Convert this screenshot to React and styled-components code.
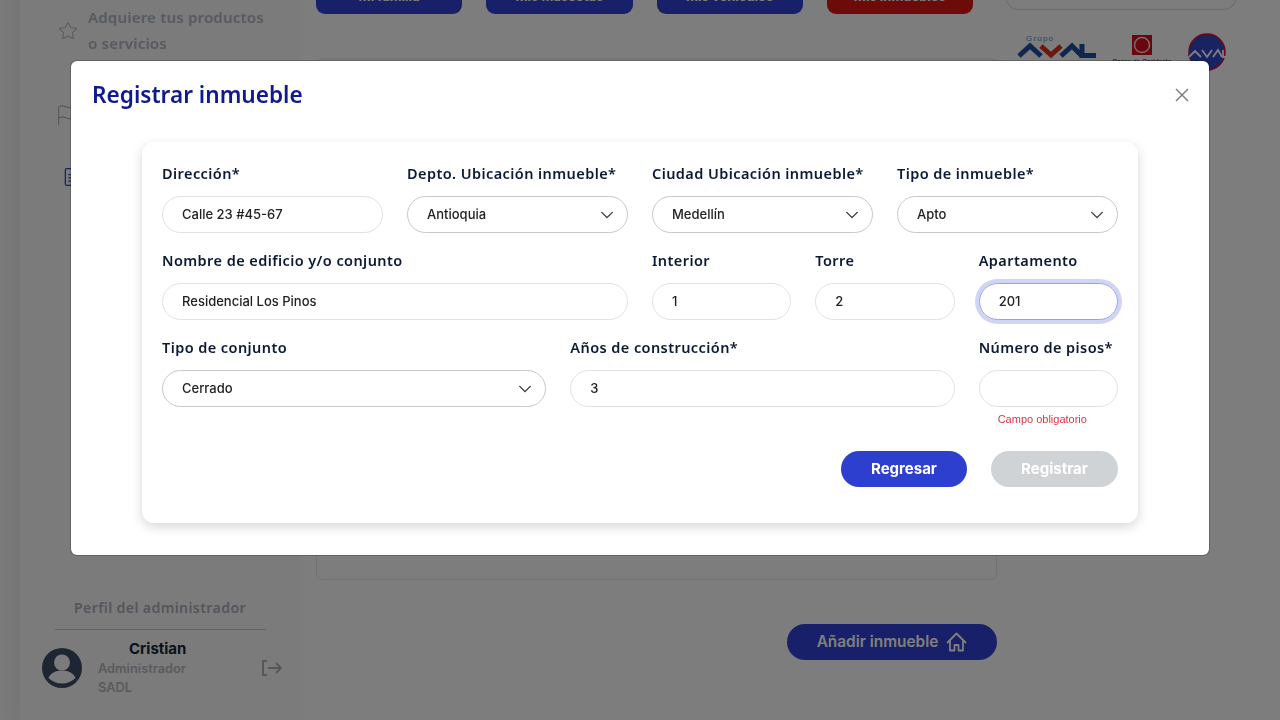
import React from "react";
import styled, { createGlobalStyle } from "styled-components";
import { Star, Flag, FileText } from "lucide-react";

const humanist = `"Noto Sans", "Open Sans", sans-serif`;
const geometric = `Inter, "Noto Sans", sans-serif`;

const Global = createGlobalStyle`
  html, body { margin: 0; padding: 0; background: #fafafa; overflow: hidden; }
  * { box-sizing: border-box; }
`;

const Viewport = styled.div`
  width: 1280px;
  height: 720px;
  overflow: hidden;
  background: #f4f4f4;
`;

const Page = styled.div`
  display: flex;
  margin-top: -26px;
  height: 746px;
`;

const Sidebar = styled.aside`
  width: 280px;
  margin-left: 20px;
  flex: none;
  background: #f7f7f7;
  box-shadow: 0 0 20px rgba(0, 0, 0, 0.08);
  padding: 31px 0 0 0;
  display: flex;
  flex-direction: column;
`;

const NavItem = styled.div`
  display: flex;
  align-items: center;
  gap: 10px;
  padding-left: ${(p) => p.$indent}px;
  color: ${(p) => p.$color};
  margin-bottom: ${(p) => p.$gap}px;
  svg { flex: none; }
`;

const NavText = styled.span`
  font: 600 15px/26px ${humanist};
  letter-spacing: 0.2px;
  color: #b0b5c2;
  margin-top: -1px;
`;

const Spacer = styled.div`
  flex: 1;
`;

const ProfileTitle = styled.div`
  text-align: center;
  font: 600 14.2px/20px ${humanist};
  letter-spacing: 0.35px;
  color: #a9adb9;
`;

const Divider = styled.div`
  height: 1px;
  margin: 11px 34px 0 35px;
  background: #c9c9cf;
`;

const Profile = styled.div`
  display: flex;
  align-items: center;
  padding: 9px 17px 0 22px;
  margin-bottom: 23px;
`;

const ProfileText = styled.div`
  margin-left: 16px;
  flex: 1;
  display: flex;
  flex-direction: column;
`;

const ProfileName = styled.div`
  font: 700 15px/20px ${geometric};
  color: #182238;
  padding-left: 31px;
`;

const ProfileLine = styled.div`
  font: 600 12.8px/19px ${geometric};
  color: #b2b5be;
`;

const Main = styled.main`
  flex: 1;
  padding-left: 16px;
  display: flex;
  flex-direction: column;
  background: #fafafa;
`;

const TopRow = styled.div`
  display: flex;
  align-items: flex-start;
`;

const Tabs = styled.div`
  display: flex;
  gap: 24px;
  width: 657px;
  flex: none;
`;

const Tab = styled.div`
  flex: 1;
  height: 40px;
  border-radius: 0 0 9px 9px;
  background: ${(p) => (p.$red ? "#da1515" : "#2f40d0")};
  color: #fff;
  font: 700 13px/44px ${geometric};
  text-align: center;
`;

const SearchBox = styled.div`
  width: 232px;
  height: 36px;
  margin-left: 32px;
  border: 1px solid #d4d4d4;
  border-top: 0;
  border-radius: 0 0 14px 14px;
`;

const LogoRow = styled.div`
  display: flex;
  align-items: flex-start;
  margin-top: 59px;
`;

const Panel = styled.div`
  width: 681px;
  height: 522px;
  flex: none;
  border: 1px solid #e4e4e4;
  border-radius: 6px;
  margin-top: -15px;
`;

const Logos = styled.div`
  display: flex;
  align-items: flex-start;
  margin-left: 19px;
  margin-top: -40px;
  svg { display: block; overflow: visible; }
`;

const LogoSlot = styled.div`
  margin-left: ${(p) => p.$left}px;
  margin-top: ${(p) => p.$top}px;
`;

const AddWrap = styled.div`
  width: 681px;
  display: flex;
  justify-content: flex-end;
  margin-top: 44px;
`;

const AddButton = styled.div`
  width: 210px;
  height: 36px;
  border-radius: 18px;
  background: #2f40d0;
  color: #fff;
  display: flex;
  align-items: center;
  justify-content: center;
  gap: 8px;
  font: 600 15.4px/20px ${geometric};
  svg { display: block; }
`;

const Overlay = styled.div`
  position: fixed;
  inset: 0;
  background: rgba(0, 0, 0, 0.5);
  padding: 60px 70px 0;
`;

const Modal = styled.div`
  height: 496px;
  background: #fff;
  border: 1px solid rgba(0, 0, 0, 0.2);
  border-radius: 7px;
  background-clip: padding-box;
  display: flex;
  flex-direction: column;
`;

const ModalHeader = styled.div`
  display: flex;
  justify-content: space-between;
  align-items: flex-start;
  padding: 15px 19px 0 21px;
  height: 81px;
`;

const Title = styled.h2`
  margin: 0;
  font: 600 22.6px/38px ${humanist};
  color: #0e1a8e;
`;

const CloseBtn = styled.button`
  border: 0;
  background: none;
  padding: 0;
  margin-top: 11px;
  width: 16px;
  height: 16px;
  color: #777;
  svg { display: block; }
`;

const Card = styled.form`
  margin: 0 71px;
  height: 381px;
  border-radius: 12px;
  background: #fff;
  box-shadow: 0 4px 12px rgba(0, 0, 0, 0.16);
  padding: 20px 20px 0;
`;

const Grid = styled.div`
  display: grid;
  grid-template-columns: repeat(12, 1fr);
  column-gap: 24px;
  row-gap: 16px;
`;

const Field = styled.div`
  grid-column: span ${(p) => p.$span};
  position: relative;
`;

const Label = styled.label`
  display: block;
  font: 600 14.5px/23px ${humanist};
  letter-spacing: 0.42px;
  color: #0c1a35;
  margin-bottom: 11px;
  white-space: nowrap;
`;

const Input = styled.div`
  height: 37px;
  border-radius: 19px;
  border: 1px solid ${(p) => (p.$focus ? "#98a0e8" : "#e0e2e6")};
  box-shadow: ${(p) => (p.$focus ? "0 0 0 4px rgba(47,64,208,0.22)" : "none")};
  padding: 0 19px 2px;
  display: flex;
  align-items: center;
  justify-content: space-between;
  font: 500 13px/20px ${geometric};
  color: #222;
`;

const Select = styled(Input)`
  border-color: #c8c8c8;
  padding-right: 13px;
  svg { display: block; margin-top: 2px; }
`;

const ErrorText = styled.div`
  position: absolute;
  left: 19px;
  top: 76px;
  font: 11px/14px "Liberation Sans", Arial, sans-serif;
  color: #dc3545;
  white-space: nowrap;
`;

const Actions = styled.div`
  display: flex;
  justify-content: flex-end;
  gap: 24px;
  margin-top: 44px;
`;

const Btn = styled.button`
  width: ${(p) => p.$w}px;
  height: 36px;
  border: 0;
  border-radius: 18px;
  background: ${(p) => (p.$off ? "#d0d3d6" : "#2d3fcf")};
  color: #fff;
  font: 700 15px/20px ${geometric};
`;

const Chevron = () => (
  <svg width="14" height="14" viewBox="0 0 16 16" fill="none">
    <path d="m2 5 6 6 6-6" stroke="#343a40" strokeWidth="1.6" strokeLinecap="round" strokeLinejoin="round" />
  </svg>
);

const Avatar = () => (
  <svg width="40" height="40" viewBox="0 0 40 40">
    <circle cx="20" cy="20" r="20" fill="#3c4c66" />
    <circle cx="20" cy="14.500" r="8" fill="#f7f7f7" />
    <path d="M6.500 30c2-5 7-7.500 13.500-7.500S31.500 25 33.500 30c-3.500 3.500-8 5.500-13.500 5.500S10 33.500 6.500 30z" fill="#f7f7f7" />
  </svg>
);

const LogoutIcon = () => (
  <svg width="22" height="18" viewBox="0 0 22 18" fill="none" stroke="#a9adb5" strokeWidth="2">
    <path d="M6 2H2v14h4" />
    <path d="M7 9h13M15 4l5 5-5 5" strokeWidth="1.8" />
  </svg>
);

const HomeIcon = () => (
  <svg width="21" height="20" viewBox="0 0 21 20" fill="none" stroke="#fff" strokeWidth="1.800" strokeLinecap="round" strokeLinejoin="round">
    <path d="M1.500 10.500 10.500 1.500l9 9" />
    <path d="M4 9v9.500h4.500V13h4v5.500H17V9" />
  </svg>
);

const AvalLogo = () => (
  <svg width="80" height="26" viewBox="0 0 80 26" fill="none">
    <text x="10" y="7" fontSize="8" letterSpacing="1.200" fontFamily="Liberation Sans, sans-serif" fill="#5f86c8">Grupo</text>
    <path d="M3 22 14 12 25 22" stroke="#1c4f9c" strokeWidth="5" />
    <path d="M25 12 35 21 45 12" stroke="#d6301e" strokeWidth="5" />
    <path d="M45 22 56 12 66 22" stroke="#1c4f9c" strokeWidth="5" />
    <path d="M66 10V21.500H80" stroke="#1c4f9c" strokeWidth="5" />
  </svg>
);

const RedLogo = () => (
  <svg width="50" height="28" viewBox="0 0 50 28" fill="none">
    <rect x="15" y="0" width="20" height="20" fill="#d60a1e" />
    <circle cx="25" cy="10" r="7.500" stroke="#f0d8d8" strokeWidth="1.500" />
    <text x="25" y="29" textAnchor="middle" fontSize="6.500" fontFamily="Liberation Sans, sans-serif" fill="#222">Banco de Occidente</text>
  </svg>
);

const SealLogo = () => (
  <svg width="42" height="38" viewBox="0 0 42 38" fill="none">
    <circle cx="21" cy="18" r="18" fill="#3046c8" stroke="#d8122a" strokeWidth="1.500" />
    <path d="M3 23 9 17 15 23M16 16l5 7 5-7M27 23l5-7 4 7" stroke="#3046c8" strokeWidth="4" />
    <path d="M3 23 9 17 15 23M16 16l5 7 5-7M27 23l5-7 4 7" stroke="#fff" strokeWidth="1.800" />
    <path d="M37 16v7h4" stroke="#fff" strokeWidth="1.800" />
  </svg>
);

const rows = [
  { span: 3, label: "Dirección*", value: "Calle 23 #45-67" },
  { span: 3, label: "Depto. Ubicación inmueble*", value: "Antioquia", select: true },
  { span: 3, label: "Ciudad Ubicación inmueble*", value: "Medellín", select: true },
  { span: 3, label: "Tipo de inmueble*", value: "Apto", select: true },
  { span: 6, label: "Nombre de edificio y/o conjunto", value: "Residencial Los Pinos" },
  { span: 2, label: "Interior", value: "1" },
  { span: 2, label: "Torre", value: "2" },
  { span: 2, label: "Apartamento", value: "201", focus: true },
  { span: 5, label: "Tipo de conjunto", value: "Cerrado", select: true },
  { span: 5, label: "Años de construcción*", value: "3" },
  { span: 2, label: "Número de pisos*", value: "", error: "Campo obligatorio" },
];

export default function App() {
  return (
    <Viewport>
      <Global />
      <Page>
        <Sidebar>
          <NavItem $indent={38} $color="#b8b8b8" $gap={48}>
            <Star size={20} strokeWidth={1.3} />
            <NavText>
              Adquiere tus productos
              <br />o servicios
            </NavText>
          </NavItem>
          <NavItem $indent={35} $color="#b0b0b0" $gap={41}>
            <Flag size={22} strokeWidth={1.2} />
          </NavItem>
          <NavItem $indent={42} $color="#2f40d0" $gap={0}>
            <FileText size={20} strokeWidth={1.5} />
          </NavItem>
          <Spacer />
          <ProfileTitle>Perfil del administrador</ProfileTitle>
          <Divider />
          <Profile>
            <Avatar />
            <ProfileText>
              <ProfileName>Cristian</ProfileName>
              <ProfileLine>Administrador</ProfileLine>
              <ProfileLine>SADL</ProfileLine>
            </ProfileText>
            <LogoutIcon />
          </Profile>
        </Sidebar>
        <Main>
          <TopRow>
            <Tabs>
              <Tab>Mi familia</Tab>
              <Tab>Mis mascotas</Tab>
              <Tab>Mis vehículos</Tab>
              <Tab $red>Mis inmuebles</Tab>
            </Tabs>
            <SearchBox />
          </TopRow>
          <LogoRow>
            <Panel />
            <Logos>
              <LogoSlot $left={0} $top={1}>
                <AvalLogo />
              </LogoSlot>
              <LogoSlot $left={21} $top={2}>
                <RedLogo />
              </LogoSlot>
              <LogoSlot $left={19} $top={1}>
                <SealLogo />
              </LogoSlot>
            </Logos>
          </LogoRow>
          <AddWrap>
            <AddButton>
              Añadir inmueble
              <HomeIcon />
            </AddButton>
          </AddWrap>
        </Main>
      </Page>
      <Overlay>
        <Modal>
          <ModalHeader>
            <Title>Registrar inmueble</Title>
            <CloseBtn type="button" aria-label="Cerrar">
              <svg width="16" height="16" viewBox="0 0 16 16" stroke="currentColor" strokeWidth="1.4">
                <path d="M2 2l12 12M14 2L2 14" />
              </svg>
            </CloseBtn>
          </ModalHeader>
          <Card>
            <Grid>
              {rows.map((r) => (
                <Field key={r.label} $span={r.span}>
                  <Label>{r.label}</Label>
                  {r.select ? (
                    <Select>
                      {r.value}
                      <Chevron />
                    </Select>
                  ) : (
                    <Input $focus={r.focus}>{r.value}</Input>
                  )}
                  {r.error && <ErrorText>{r.error}</ErrorText>}
                </Field>
              ))}
            </Grid>
            <Actions>
              <Btn type="button" $w={126}>Regresar</Btn>
              <Btn type="button" $w={127} $off>Registrar</Btn>
            </Actions>
          </Card>
        </Modal>
      </Overlay>
    </Viewport>
  );
}
